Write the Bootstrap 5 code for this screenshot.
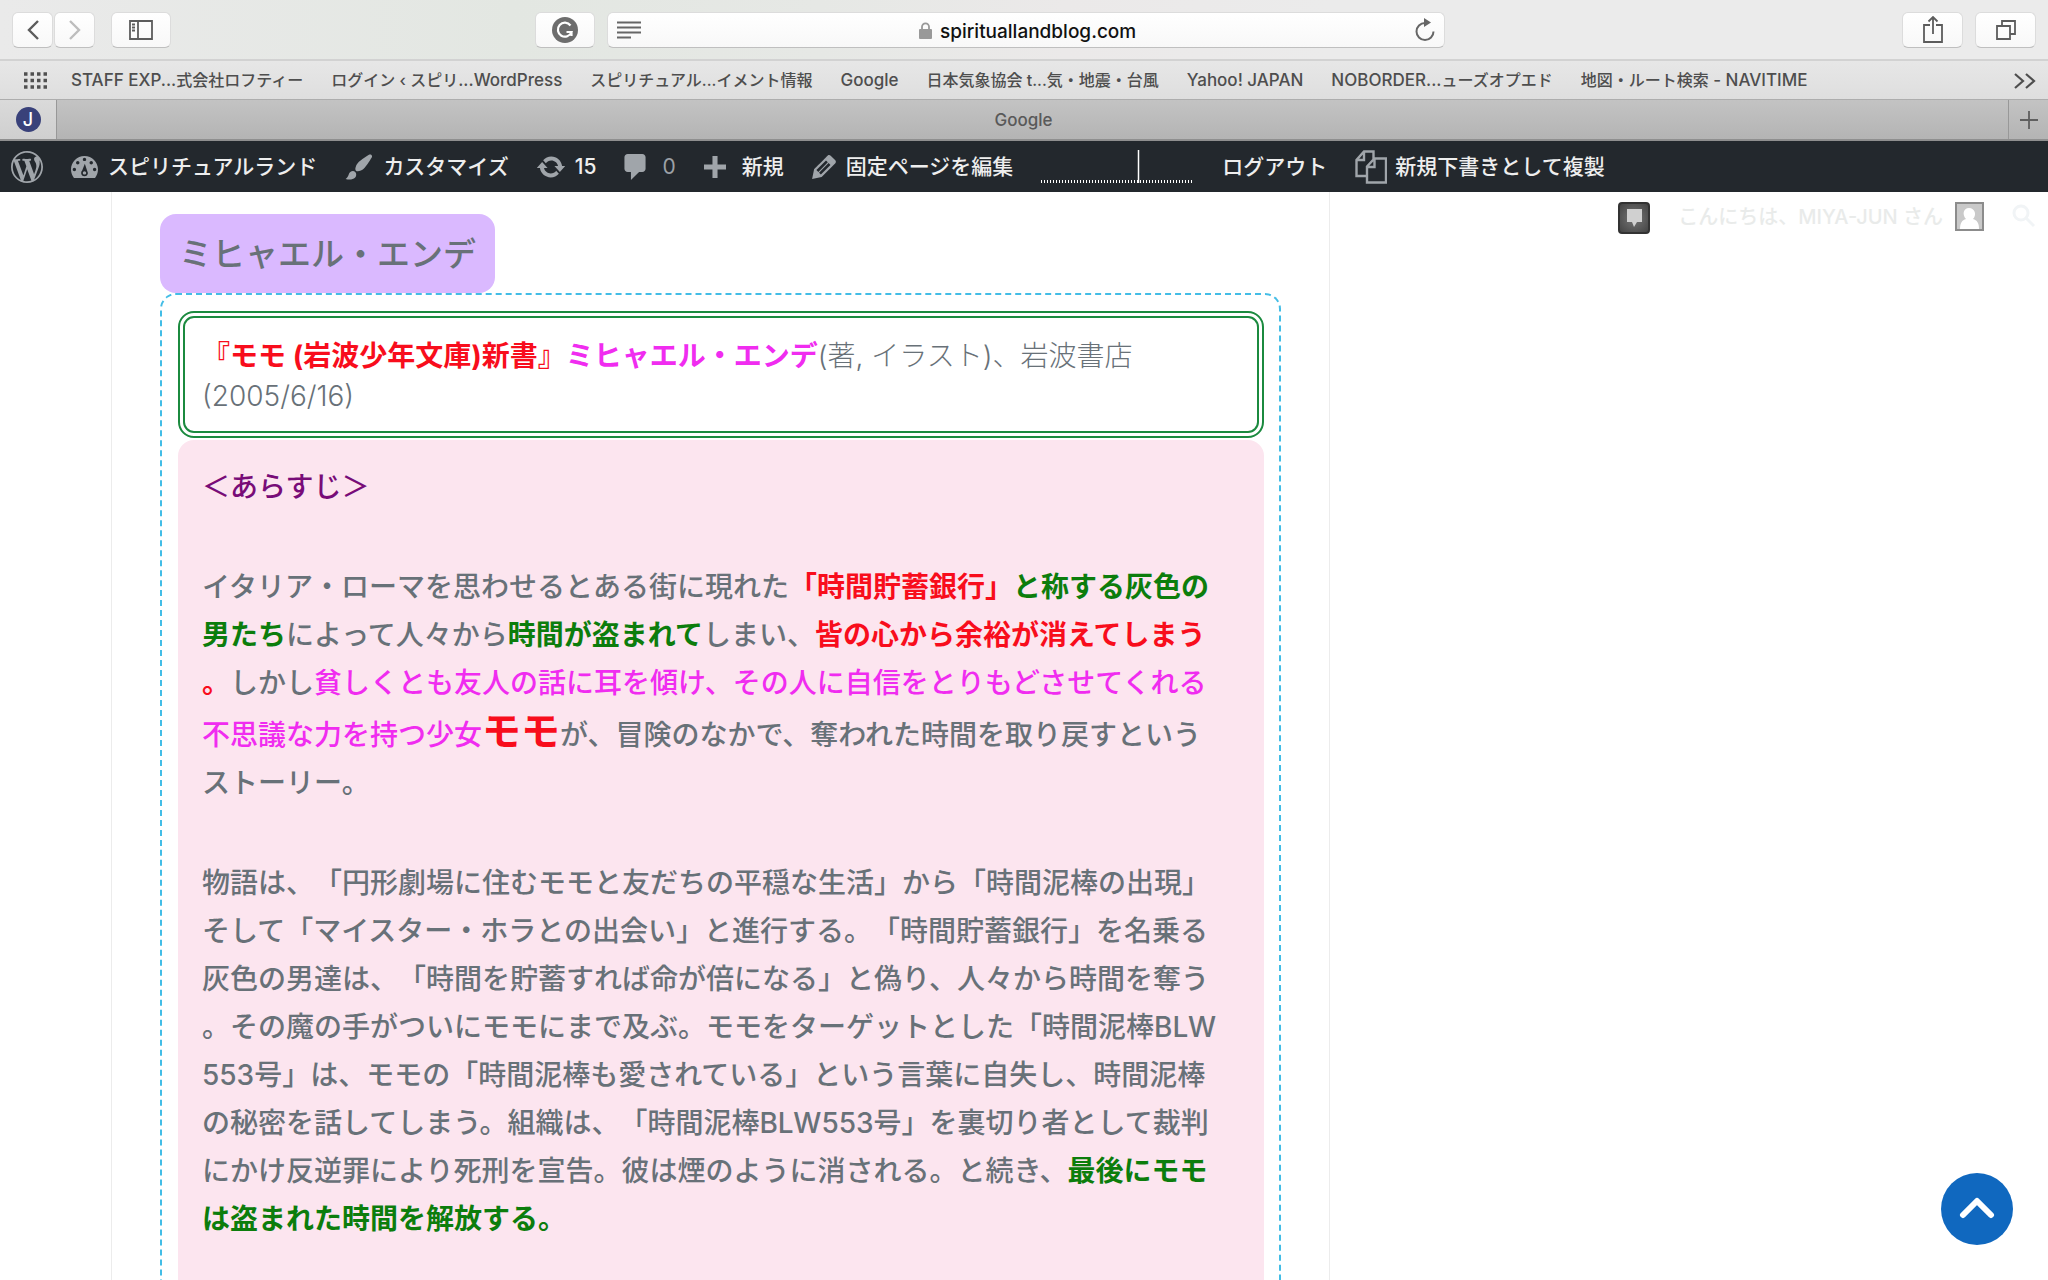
<!DOCTYPE html>
<html lang="ja">
<head>
<meta charset="utf-8">
<meta name="viewport" content="width=device-width, initial-scale=1">
<title>spirituallandblog.com</title>
<link rel="stylesheet" href="https://cdn.jsdelivr.net/npm/bootstrap@5.3.0/dist/css/bootstrap.min.css">
<style>
body{font-family:Inter,"Noto Sans CJK JP",sans-serif;background:#fff;color:#687178;text-spacing-trim:space-all}
svg{display:block;flex:none}
.toolbar{height:61px;padding:12px 12px 0 12px;background:linear-gradient(90deg,#eaeaea,#e3e7e2 25%,#e6e8e5 40%,#ebe9e9 52%,#ebebeb 65%);border-bottom:2px solid #d2d2d2}
.tool-btn{height:36px;border:1px solid #dcdcdc;border-bottom-color:#bfbfbf;border-radius:6px;background:linear-gradient(#fff,#f8f8f8);padding:0;display:flex;align-items:center;justify-content:center;color:#5c5c5c}
.w-nav{width:41px}.w-std{width:60px}.w-end{width:61px}
.nav-pair{gap:1px}
.url-bar{width:838px;height:36px;border:1px solid #dcdcdc;border-bottom-color:#bfbfbf;border-radius:6px;background:linear-gradient(#fff,#f8f8f8);padding:0 9px;color:#777}
.url-bar input{width:196px;border:0;padding:2px 0 0;background:none;font:500 19px Inter,sans-serif;color:#111;outline:0}
.url-bar button{border:0;background:none;padding:0;color:#666}
.side{flex:1 1 0}
.bookmarks{height:39px;background:linear-gradient(#e7e7e7,#dedede);gap:28px;padding:1px 12px 0 24px;border-bottom:1px solid #adadad;font-size:17px;font-weight:500}
.bookmarks a{color:#4e4e4e;text-decoration:none;white-space:nowrap}
.bookmarks .ja{font-size:16px}
.bookmarks .grid-dots{margin-right:-4px}
.tabs{height:41px;background:linear-gradient(#c3c3c3,#b4b4b4);border-bottom:2px solid #8f8f8f;font-size:17px;font-weight:500;color:#595959}
.tab-pin{width:57px;background:linear-gradient(#dadada,#cfcfcf);border-right:1px solid #989898}
.tab-title{padding:2px 18px 0 0}
.tab-mark{width:25px;height:25px;border-radius:50%;background:#39417a;color:#fff;font-size:18px;line-height:25px;text-align:center}
.tab-new{width:40px;border:0;border-left:1px solid #989898;background:none;color:#5f5f5f;padding:0}
.adminbar{height:51px;background:#23282d;padding-left:11px;gap:28px;font-size:21px;font-weight:500}
.adminbar a{color:#eee;text-decoration:none;display:flex;align-items:center;gap:10px;white-space:nowrap}
.adminbar svg{color:#a0a5aa}
.adminbar .dim{color:#9ca1a6;font-weight:400}
.post{width:1219px;margin-left:111px;border:1px solid #ececec;border-width:0 1px;padding:22px 48px 0}
.author-tag{background:#dab9ff;border-radius:16px;font-size:33px;font-weight:500;line-height:77px;padding:2px 19px 0;margin:0;color:#687178}
.frame{border:2px dashed #43bde6;border-bottom:0;border-radius:16px 16px 0 0;padding:16px 15px 0 16px}
.cite{border:7px double #1b8a3f;border-radius:16px;padding:18px 17px 15px;font-size:28px;line-height:40px;font-weight:300;margin-bottom:2px}
.story{background:#fce5ef;border-radius:16px 16px 0 0;padding:23px 24px 0;font-size:28px;line-height:48px;font-weight:500;white-space:nowrap}
.story p{margin:0 0 52px}
.story strong,.cite strong{font-weight:700}
.c-red{color:#f80d1c}.c-pink{color:#f02cf0}.c-green{color:#0c7d0c}.c-purple{color:#780c78}
.momo{font-size:39px;line-height:48px}
.greet{padding:10px 12px 0 0;gap:12px;font-size:20px;font-weight:500;color:#e9ebea}
.notify{width:32px;height:32px;border:2px solid #333;border-radius:4px;background:radial-gradient(#777,#444);padding:0;display:flex;align-items:center;justify-content:center;color:#d0d0d0}
.find{border:0;background:none;padding:2px 0 0;color:#f1f4f6}
.to-top{position:fixed;right:35px;bottom:35px;width:72px;height:72px;border:0;border-radius:50%;background:#1068bf;color:#fff;padding:0;display:flex;align-items:center;justify-content:center}
</style>
<script src="https://cdn.jsdelivr.net/npm/bootstrap@5.3.0/dist/js/bootstrap.bundle.min.js"></script>
</head>
<body class="vh-100 d-flex flex-column overflow-hidden">
<header class="flex-shrink-0">
  <div class="toolbar d-flex align-items-start">
    <div class="side d-flex">
      <div class="nav-pair d-flex">
        <button class="tool-btn w-nav" aria-label="戻る"><svg width="14" height="22" viewBox="0 0 14 22" fill="none" stroke="currentColor" stroke-width="2.4"><path d="M12 2 3 11l9 9"/></svg></button>
        <button class="tool-btn w-nav" aria-label="進む"><svg width="14" height="22" viewBox="0 0 14 22" fill="none" stroke="#bdbdbd" stroke-width="2.4"><path d="m2 2 9 9-9 9"/></svg></button>
      </div>
      <button class="tool-btn w-std ms-3" aria-label="サイドバー"><svg width="24" height="20" viewBox="0 0 24 20" fill="none" stroke="currentColor" stroke-width="1.8"><path d="M1 1h22v18H1zM9 1v18M3 4.5h3M3 7.5h3M3 10.5h3"/></svg></button>
      <button class="tool-btn w-std ms-auto me-2" aria-label="Grammarly"><svg width="26" height="26" viewBox="0 0 26 26"><circle cx="13" cy="13" r="13" fill="#6d6d6d"/><path d="M18.5 8.5A7 7 0 1 0 19.500 15H14.500M19.500 15v4" fill="none" stroke="#fff" stroke-width="2.2"/></svg></button>
    </div>
    <div class="url-bar d-flex align-items-center justify-content-between ms-1">
      <button aria-label="リーダー"><svg width="24" height="18" viewBox="0 0 24 18" stroke="currentColor" stroke-width="1.8"><path d="M0 1.5h24M0 6.5h24M0 11.5h24M0 16.5h14"/></svg></button>
      <div class="d-flex align-items-center gap-2">
        <svg width="13" height="17" viewBox="0 0 13 17"><path d="M3 8V4.8a3.5 3.5 0 0 1 7 0V8" fill="none" stroke="#999" stroke-width="1.8"/><rect y="7" width="13" height="10" rx="1" fill="#999"/></svg>
        <input type="text" aria-label="アドレス" value="spirituallandblog.com">
      </div>
      <button aria-label="再読み込み"><svg width="21" height="24" viewBox="0 0 21 24"><path d="M11 5a8.500 8.500 0 1 0 8.500 8.500" fill="none" stroke="currentColor" stroke-width="2"/><path d="M10 0v9l7-4.500z" fill="currentColor"/></svg></button>
    </div>
    <div class="side d-flex justify-content-end gap-2">
      <button class="tool-btn w-end me-1" aria-label="共有"><svg width="20" height="28" viewBox="0 0 20 28" fill="none" stroke="currentColor" stroke-width="1.8"><path d="M7 9H1v17h18V9h-6M10 18V1M5.500 5.500 10 1l4.500 4.500"/></svg></button>
      <button class="tool-btn w-end" aria-label="タブ一覧"><svg width="20" height="20" viewBox="0 0 20 20" fill="none" stroke="currentColor" stroke-width="1.8"><path d="M1 6h13v13H1zM6 6V1h13v13h-5"/></svg></button>
    </div>
  </div>
  <nav class="bookmarks d-flex align-items-center" aria-label="ブックマーク">
    <svg class="grid-dots" width="23" height="17" viewBox="0 0 23 17" fill="none" stroke="#505050" stroke-width="3.500" stroke-dasharray="3.500 3"><path d="M0 2h23M0 8.500h23M0 15h23"/></svg>
    <a href="#">STAFF EXP...<span class="ja">式会社ロフティー</span></a>
    <a href="#"><span class="ja">ログイン ‹ スピリ</span>...WordPress</a>
    <a href="#"><span class="ja">スピリチュアル...イメント情報</span></a>
    <a href="#">Google</a>
    <a href="#"><span class="ja">日本気象協会 t...気・地震・台風</span></a>
    <a href="#">Yahoo! JAPAN</a>
    <a href="#">NOBORDER...<span class="ja">ューズオプエド</span></a>
    <a href="#"><span class="ja">地図・ルート検索</span> - NAVITIME</a>
    <a href="#" class="ms-auto" aria-label="その他"><svg width="23" height="16" viewBox="0 0 23 16" fill="none" stroke="#4e4e4e" stroke-width="2.2"><path d="m2 1 8 7-8 7M13 1l8 7-8 7"/></svg></a>
  </nav>
  <div class="tabs d-flex align-items-stretch">
    <div class="tab-pin d-flex align-items-center justify-content-center"><span class="tab-mark">J</span></div>
    <div class="tab-title flex-fill d-flex align-items-center justify-content-center">Google</div>
    <button class="tab-new d-flex align-items-center justify-content-center" aria-label="新しいタブ"><svg width="18" height="18" viewBox="0 0 18 18" stroke="currentColor" stroke-width="1.8"><path d="M9 0v18M0 9h18"/></svg></button>
  </div>
  <nav class="adminbar d-flex align-items-center" aria-label="管理バー">
    <a href="#" aria-label="WordPress"><svg width="32" height="32" viewBox="0 0 20 20" fill="currentColor"><path d="M20 10c0-5.510-4.490-10-10-10C4.480 0 0 4.490 0 10c0 5.520 4.480 10 10 10 5.510 0 10-4.480 10-10zM7.780 15.370L4.370 6.220c.55-.02 1.170-.08 1.170-.08.5-.06.44-1.130-.06-1.110 0 0-1.450.11-2.370.11-.18 0-.37 0-.58-.01C4.120 2.690 6.870 1.110 10 1.110c2.330 0 4.450.87 6.050 2.340-.68-.11-1.650.39-1.650 1.580 0 .74.45 1.360.9 2.100.35.61.55 1.360.55 2.460 0 1.490-1.400 5-1.400 5l-3.030-8.370c.54-.02.82-.17.82-.17.5-.05.44-1.250-.06-1.220 0 0-1.440.12-2.380.12-.87 0-2.330-.12-2.330-.12-.5-.03-.56 1.200-.06 1.220l.92.08 1.260 3.410zM17.410 10c.24-.64.74-1.870.43-4.250.7 1.290 1.050 2.710 1.050 4.250 0 3.290-1.730 6.240-4.400 7.780.97-2.590 1.940-5.200 2.920-7.780zM6.100 18.090C3.120 16.650 1.110 13.530 1.110 10c0-1.300.23-2.480.72-3.590C3.250 10.300 4.670 14.200 6.100 18.090zm4.030-6.630l2.580 6.980c-.86.29-1.760.45-2.710.45-.79 0-1.570-.11-2.290-.33.81-2.380 1.620-4.740 2.420-7.100z"/></svg></a>
    <a href="#"><svg width="27" height="26" viewBox="2 2.500 16 14" fill="currentColor"><path d="M3.760 16h12.480c1.100-1.370 1.760-3.110 1.760-5 0-4.420-3.580-8-8-8s-8 3.580-8 8c0 1.890.66 3.630 1.760 5zM10 4c.55 0 1 .45 1 1s-.45 1-1 1-1-.45-1-1 .45-1 1-1zM6 6c.55 0 1 .45 1 1s-.45 1-1 1-1-.45-1-1 .45-1 1-1zm8 0c.55 0 1 .45 1 1s-.45 1-1 1-1-.45-1-1 .45-1 1-1zm-3.800 1.500l1.800 5.500c0 1.100-.9 2-2 2s-2-.9-2-2c0-.57.24-1.080.63-1.450zM4 10c.55 0 1 .45 1 1s-.45 1-1 1-1-.45-1-1 .45-1 1-1zm12 0c.55 0 1 .45 1 1s-.45 1-1 1-1-.45-1-1 .45-1 1-1zm-5 3c0-.55-.45-1-1-1s-1 .45-1 1 .45 1 1 1 1-.45 1-1z"/></svg>スピリチュアルランド</a>
    <a href="#"><svg width="28" height="28" viewBox="1 1 18 18" fill="currentColor"><path d="M18.330 3.570s.27-.8-.31-1.360c-.53-.52-1.220-.24-1.220-.24-.61.3-5.760 3.470-7.670 5.570-.86.96-2.060 3.790-1.090 4.820.92.98 3.960-.17 4.790-1 2.060-2.060 5.210-7.170 5.500-7.790zM1.400 17.650c2.370-1.560 1.460-3.410 3.230-4.640.93-.65 2.220-.62 3.080.29.63.67.8 2.570-.16 3.460-1.570 1.450-4 1.550-6.150.89z"/></svg>カスタマイズ</a>
    <a href="#"><svg width="28" height="28" viewBox="1 1 18 18" fill="currentColor"><path d="M10.200 3.280c3.530 0 6.430 2.610 6.920 6h2.080l-3.500 4-3.500-4h2.320c-.45-1.970-2.210-3.450-4.320-3.450-1.450 0-2.730.71-3.540 1.780L4.950 5.660C6.230 4.200 8.110 3.280 10.200 3.280zm-.4 13.440c-3.520 0-6.430-2.610-6.920-6H.8l3.500-4c1.170 1.330 2.330 2.670 3.500 4H5.480c.45 1.970 2.210 3.450 4.320 3.450 1.450 0 2.730-.71 3.540-1.780l1.710 1.950c-1.280 1.460-3.150 2.380-5.250 2.380z"/></svg>15</a>
    <a href="#" class="dim gap-3"><svg width="22" height="26" viewBox="3 2 13 16" fill="currentColor"><path d="M5 2h9c1.100 0 2 .9 2 2v7c0 1.100-.9 2-2 2h-2l-5 5v-5H5c-1.100 0-2-.9-2-2V4c0-1.100.9-2 2-2z"/></svg>0</a>
    <a href="#" class="gap-3"><svg width="22" height="22" viewBox="4 2 13 13" fill="currentColor"><path d="M17 7v3h-5v5H9v-5H4V7h5V2h3v5h5z"/></svg>新規</a>
    <a href="#"><svg width="24" height="24" viewBox="3 3 14 14" fill="currentColor"><path d="M13.890 3.390l2.710 2.720c.46.46.42 1.240.03 1.640l-8.010 8.020-5.560 1.160 1.160-5.580s7.600-7.630 7.990-8.030c.39-.39 1.220-.39 1.680.07zm-2.730 2.790l-5.590 5.610 1.110 1.110 5.540-5.650zm-2.970 8.230l5.580-5.600-1.070-1.080-5.590 5.600z"/></svg>固定ページを編集</a>
    <a href="#" aria-label="統計"><svg width="153" height="34" viewBox="0 0 153 34" stroke="#fff"><path d="M0 31.500h153" stroke-width="3" stroke-dasharray="1 2"/><path d="M97.500 0v33" stroke-width="1.5"/></svg></a>
    <a href="#">ログアウト</a>
    <a href="#" class="gap-2"><svg width="32" height="34" viewBox="0 0 32 34" fill="none" stroke="currentColor" stroke-width="2.4"><path d="M11 26H1.500V10L9 1.500h9.500V9M9 2v8H2M12 16.500 19.500 8.500H31v24H12zM19.500 9v8H12"/></svg>新規下書きとして複製</a>
  </nav>
</header>
<main class="flex-fill d-flex overflow-hidden">
  <article class="post d-flex flex-column">
    <div class="d-flex"><h1 class="author-tag">ミヒャエル・エンデ</h1></div>
    <div class="frame flex-fill d-flex flex-column">
      <div class="cite"><strong class="c-red">『モモ (岩波少年文庫)新書』</strong><strong class="c-pink">ミヒャエル・エンデ</strong>(著, イラスト)、岩波書店<br>(2005/6/16)</div>
      <div class="story flex-fill">
        <p class="c-purple">＜あらすじ＞</p>
        <p>イタリア・ローマを思わせるとある街に現れた<strong class="c-red">「時間貯蓄銀行」</strong><strong class="c-green">と称する灰色の<br>男たち</strong>によって人々から<strong class="c-green">時間が盗まれて</strong>しまい、<strong class="c-red">皆の心から余裕が消えてしまう<br>。</strong>しかし<span class="c-pink">貧しくとも友人の話に耳を傾け、その人に自信をとりもどさせてくれる<br>不思議な力を持つ少女</span><strong class="c-red momo">モモ</strong>が、冒険のなかで、奪われた時間を取り戻すという<br>ストーリー。</p>
        <p>物語は、「円形劇場に住むモモと友だちの平穏な生活」から「時間泥棒の出現」<br>そして「マイスター・ホラとの出会い」と進行する。「時間貯蓄銀行」を名乗る<br>灰色の男達は、「時間を貯蓄すれば命が倍になる」と偽り、人々から時間を奪う<br>。その魔の手がついにモモにまで及ぶ。モモをターゲットとした「時間泥棒BLW<br>553号」は、モモの「時間泥棒も愛されている」という言葉に自失し、時間泥棒<br>の秘密を話してしまう。組織は、「時間泥棒BLW553号」を裏切り者として裁判<br>にかけ反逆罪により死刑を宣告。彼は煙のように消される。と続き、<strong class="c-green">最後にモモ<br>は盗まれた時間を解放する。</strong></p>
      </div>
    </div>
  </article>
  <aside class="greet flex-fill d-flex align-items-start justify-content-end">
    <button class="notify me-3" aria-label="通知"><svg width="17" height="18" viewBox="0 0 17 18" fill="currentColor"><path d="M1 0h15v13h-5l-3 5-2-5H1z"/></svg></button>
    <span>こんにちは、MIYA-JUN さん</span>
    <svg width="29" height="29" viewBox="0 0 29 29"><path d="M1 1h27v27H1z" fill="#c9c9c9" stroke="#8c8c8c" stroke-width="2"/><path d="M5 27c0-6 2-9 6-10-4-4-3-11 3-11s8 7 4 11c4 1 6 4 6 10z" fill="#fff"/></svg>
    <button class="find ms-3" aria-label="検索"><svg width="24" height="24" viewBox="0 0 24 24" fill="none" stroke="currentColor" stroke-width="3"><circle cx="9" cy="9" r="7"/><path d="m14 14 8 8"/></svg></button>
  </aside>
</main>
<button class="to-top" aria-label="ページの先頭へ"><svg width="36" height="24" viewBox="0 0 36 24" fill="none" stroke="#fff" stroke-width="6" stroke-linecap="round" stroke-linejoin="round"><path d="M4 18 18 4l14 14"/></svg></button>
</body>
</html>
